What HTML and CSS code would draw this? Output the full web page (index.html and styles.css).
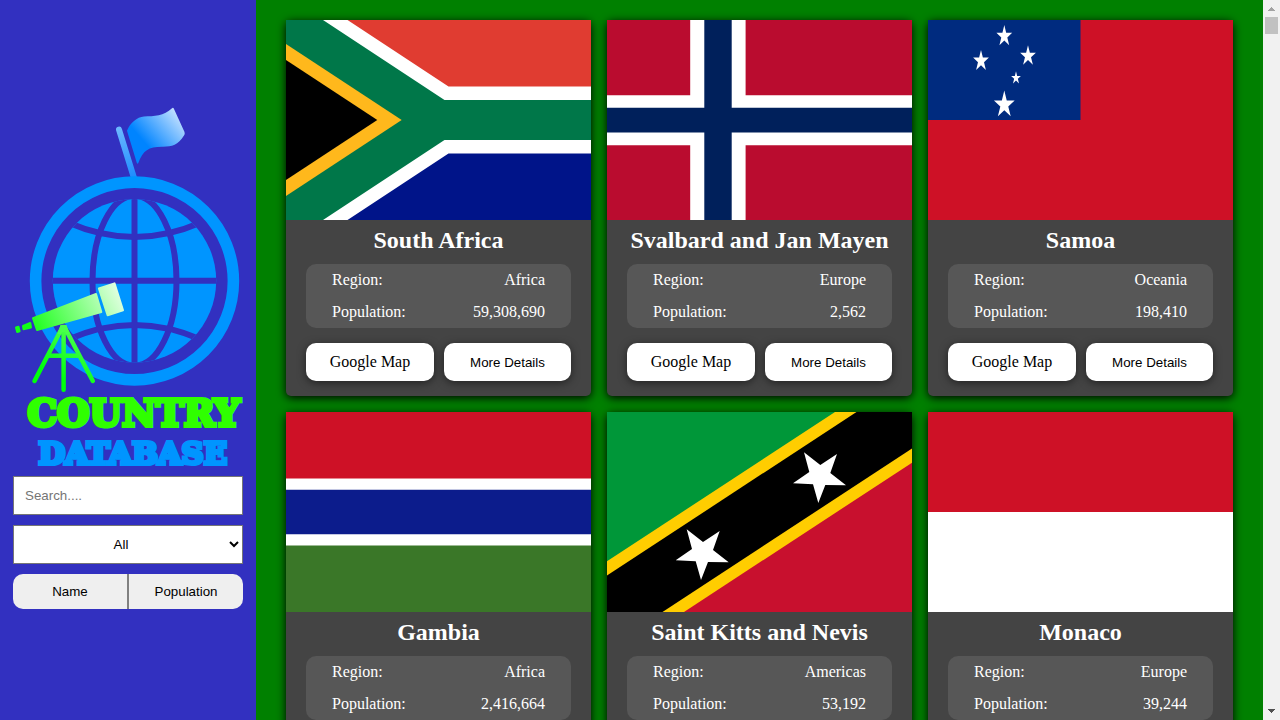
FILE: index.html
```html
<!DOCTYPE html>
<html lang="en">
<head>
<meta charset="utf-8">
<title>Country Database</title>
<link rel="stylesheet" href="styles.css">
</head>
<body>
<div class="app">
  <aside class="sidebar">
    <svg class="logo" viewBox="0 100 256 376" role="img" aria-label="Country Database">
      <defs>
        <linearGradient id="flag" gradientUnits="userSpaceOnUse" x1="145" y1="143" x2="181" y2="112"><stop offset="0" stop-color="#0084ff"/><stop offset="1" stop-color="#cfe6ff"/></linearGradient>
        <linearGradient id="pole" gradientUnits="userSpaceOnUse" x1="119" y1="128" x2="134" y2="178"><stop offset="0" stop-color="#6bb8ff"/><stop offset="1" stop-color="#1d8cff"/></linearGradient>
        <linearGradient id="scope" gradientUnits="userSpaceOnUse" x1="36" y1="327" x2="118" y2="285"><stop offset="0" stop-color="#22ff22"/><stop offset="1" stop-color="#e4ffe4"/></linearGradient>
        <linearGradient id="legs" gradientUnits="userSpaceOnUse" x1="50" y1="372" x2="78" y2="325"><stop offset="0" stop-color="#00ff0d"/><stop offset="1" stop-color="#55ff58"/></linearGradient>
        <clipPath id="disc"><circle cx="134.5" cy="280.8" r="81.7"/></clipPath>
      </defs>
      <path d="M119 129.700L134 178" stroke="url(#pole)" stroke-width="6" stroke-linecap="round"/>
      <circle cx="134.5" cy="281" r="98.9" fill="none" stroke="#0095ff" stroke-width="11.6"/>
      <circle cx="134.5" cy="280.8" r="81.7" fill="#0095ff"/>
      <g clip-path="url(#disc)" fill="none" stroke="#3230c0" stroke-width="6">
        <path d="M134.500 196V366M50 280.800H219"/>
        <ellipse cx="134.5" cy="280.8" rx="42" ry="85"/>
        <path d="M68 222.500Q134.500 251.500 201 222.500M68 339.500Q134.500 310.500 201 339.500"/>
      </g>
      <path fill="url(#flag)" d="M127 130.700C130 123 137 117 144 116.500C154 116 164 116 172 108.200Q173.200 107 174 109L184.500 132Q185.200 134 184 135.500C178 145 172 146.700 163 146.700C149 146.500 143 150 138.300 163Q137.300 164.500 136.700 162.500Z"/>
      <g fill="url(#scope)" stroke="url(#scope)" stroke-width="2" stroke-linejoin="round">
        <path d="M33 318.200L96 294L101.300 312L37 330Z"/>
        <path d="M98.900 288.400L114.500 283.400L123 310.200L107.600 315.200Z"/>
      </g>
      <g fill="#12ff18" stroke="#12ff18" stroke-width="2" stroke-linejoin="round">
        <path d="M23 326L30.200 323L31 327.500L23.500 329.200Z"/>
        <path d="M16 327.500L18.500 326.700L19.600 331.300L17.200 332Z"/>
      </g>
      <g fill="none" stroke="url(#legs)" stroke-width="4.500" stroke-linecap="round" stroke-linejoin="round">
        <path d="M62.500 327L34.500 381M64.500 327L92.800 381M63.600 327V389.700"/>
        <path d="M48.500 355.700H79" stroke-linecap="butt"/>
      </g>
      <path fill="#49ff4b" d="M60.500 325H66.500L69.500 334H66L65 332H62L61 334H57.500Z"/>
      <text class="logo-top" x="27.500" y="426.300" textLength="212.500" lengthAdjust="spacingAndGlyphs">COUNTRY</text>
      <text class="logo-bottom" x="38.500" y="463.800" textLength="188.500" lengthAdjust="spacingAndGlyphs">DATABASE</text>
    </svg>
    <input class="field" type="text" placeholder="Search....">
    <select class="field region"><option>All</option></select>
    <div class="sort"><button class="sort-btn">Name</button><button class="sort-btn">Population</button></div>
  </aside>

  <main class="cards">
    <article class="card">
      <svg class="flag" viewBox="0 0 305 200">
        <path fill="#e03c31" d="M0 0H305V100H0Z"/><path fill="#001489" d="M0 100H305V200H0Z"/>
        <path fill="#fff" d="M0 0H61.500L162.500 66.500H305V133.500H162.500L61.500 200H0Z"/>
        <path fill="#007749" d="M0 0H37L158.500 80H305V120H158.500L37 200H0Z"/>
        <path fill="#ffb81c" d="M0 24L115.700 100L0 176Z"/><path d="M0 40L91.300 100L0 160Z"/>
      </svg>
      <h2 class="name">South Africa</h2>
      <dl class="facts"><div class="fact"><dt>Region:</dt><dd>Africa</dd></div><div class="fact"><dt>Population:</dt><dd>59,308,690</dd></div></dl>
      <div class="actions"><a class="action">Google Map</a><button class="action">More Details</button></div>
    </article>
    <article class="card">
      <svg class="flag" viewBox="0 0 305 200">
        <path fill="#ba0c2f" d="M0 0H305V200H0Z"/>
        <path fill="#fff" d="M83.200 0H138.600V200H83.200ZM0 75.200H305V125.200H0Z"/>
        <path fill="#00205b" d="M97.300 0H124.700V200H97.300ZM0 87.700H305V112.500H0Z"/>
      </svg>
      <h2 class="name">Svalbard and Jan Mayen</h2>
      <dl class="facts"><div class="fact"><dt>Region:</dt><dd>Europe</dd></div><div class="fact"><dt>Population:</dt><dd>2,562</dd></div></dl>
      <div class="actions"><a class="action">Google Map</a><button class="action">More Details</button></div>
    </article>
    <article class="card">
      <svg class="flag" viewBox="0 0 305 200">
        <defs><path id="star" d="M0-1L.2245-.309L.951-.309L.3633.118L.5878.809L0 .382L-.5878.809L-.3633.118L-.951-.309L-.2245-.309Z"/></defs>
        <path fill="#ce1126" d="M0 0H305V200H0Z"/><path fill="#002b7f" d="M0 0H152.500V100H0Z"/>
        <g fill="#fff">
          <use href="#star" transform="translate(76.300 16.200) scale(8.300 11.300)"/>
          <use href="#star" transform="translate(53 41) scale(8.300 11)"/>
          <use href="#star" transform="translate(100 36) scale(8.300 10.700)"/>
          <use href="#star" transform="translate(88 58) scale(5.100 6.800)"/>
          <use href="#star" transform="translate(76.300 84.800) scale(10.900 14.300)"/>
        </g>
      </svg>
      <h2 class="name">Samoa</h2>
      <dl class="facts"><div class="fact"><dt>Region:</dt><dd>Oceania</dd></div><div class="fact"><dt>Population:</dt><dd>198,410</dd></div></dl>
      <div class="actions"><a class="action">Google Map</a><button class="action">More Details</button></div>
    </article>
    <article class="card">
      <svg class="flag" viewBox="0 0 305 200">
        <path fill="#fff" d="M0 0H305V200H0Z"/><path fill="#ce1126" d="M0 0H305V66.600H0Z"/>
        <path fill="#0c1c8c" d="M0 77.700H305V122.300H0Z"/><path fill="#3a7728" d="M0 133.400H305V200H0Z"/>
      </svg>
      <h2 class="name">Gambia</h2>
      <dl class="facts"><div class="fact"><dt>Region:</dt><dd>Africa</dd></div><div class="fact"><dt>Population:</dt><dd>2,416,664</dd></div></dl>
    </article>
    <article class="card">
      <svg class="flag" viewBox="0 0 305 200">
        <path fill="#009739" d="M0 0H305L0 200Z"/><path fill="#c8102e" d="M305 0V200H0Z"/>
        <path fill="#ffcd00" d="M0 149.300L228 0H305V50.700L77 200H0Z"/>
        <path d="M0 163.500L249.500 0H305V36.500L55.500 200H0Z"/>
        <path fill="#fff" d="M197 40.300L213.300 53L230 42L223.300 61L239 73.300L218.300 73L211.300 91L206 72.300L186 71.300L202.300 60Z"/>
        <path fill="#fff" d="M79.700 117.300L96 130L112.700 119L106 138L121.700 150.300L101 150L94 168L88.700 149.300L68.700 148.300L85 137Z"/>
      </svg>
      <h2 class="name">Saint Kitts and Nevis</h2>
      <dl class="facts"><div class="fact"><dt>Region:</dt><dd>Americas</dd></div><div class="fact"><dt>Population:</dt><dd>53,192</dd></div></dl>
    </article>
    <article class="card">
      <svg class="flag" viewBox="0 0 305 200"><path fill="#ce1126" d="M0 0H305V100H0Z"/><path fill="#fff" d="M0 100H305V200H0Z"/></svg>
      <h2 class="name">Monaco</h2>
      <dl class="facts"><div class="fact"><dt>Region:</dt><dd>Europe</dd></div><div class="fact"><dt>Population:</dt><dd>39,244</dd></div></dl>
    </article>
  </main>

  <div class="scrollbar">
    <svg class="arrow" viewBox="0 0 17 17" shape-rendering="crispEdges"><path fill="#a3a3a3" d="M8 7h1v1h1v1h1v1h1v1H5v-1h1V9h1V8h1z"/></svg>
    <div class="thumb"></div>
    <svg class="arrow" viewBox="0 0 17 17" shape-rendering="crispEdges"><path fill="#505050" d="M5 6h7v1h-1v1h-1v1H9v1H8V9H7V8H6V7H5z"/></svg>
  </div>
</div>
</body>
</html>
```

FILE: styles.css
```css
* { box-sizing: border-box; }

body {
  margin: 0;
  height: 720px;
  overflow: hidden;
  font: 16px/18px "Liberation Serif", "Times New Roman", serif;
}

.app {
  display: flex;
  height: 720px;
  background: #008000;
}

.sidebar {
  display: flex;
  flex-direction: column;
  flex: 0 0 256px;
  padding: 100px 13px 0;
  background: #3230c0;
}

.logo {
  flex: none;
  width: 256px;
  height: 376px;
  margin: 0 -13px;
}

.logo-top,
.logo-bottom {
  font-family: "DejaVu Serif", serif;
  font-weight: bold;
  stroke-width: 4px;
}

.logo-top { font-size: 37px; fill: #2fff00; stroke: #2fff00; }
.logo-bottom { font-size: 30px; fill: #0095ff; stroke: #0095ff; }

.field {
  flex: none;
  width: 230px;
  height: 39px;
  margin: 0 0 10px;
  padding: 0 11px;
  border: 1px solid #767676;
  border-radius: 0;
  background: #fff;
  font: 13.333px "Liberation Sans", Arial, sans-serif;
  color: #000;
}

.field::placeholder { color: #757575; }
.region { padding: 0 2px 0 0; text-align: center; }

.sort {
  display: flex;
  height: 35px;
  border-radius: 10px;
  overflow: hidden;
}

.sort-btn {
  flex: 1;
  padding: 0;
  border: 0;
  background: #efefef;
  font: 13.333px "Liberation Sans", Arial, sans-serif;
  color: #000;
}

.sort-btn:first-child { border-right: 1px solid #808080; }
.sort-btn:last-child { border-left: 1px solid #808080; }

.cards {
  display: grid;
  grid-template-columns: repeat(3, 305px);
  grid-auto-rows: 376px;
  gap: 16px;
  flex: 1;
  padding: 20px 30px;
  overflow: hidden;
}

.card {
  border-radius: 5px;
  background: #444;
  box-shadow: 0 2px 10px #000;
}

.flag {
  display: block;
  width: 305px;
  height: 200px;
}

.name {
  margin: 0 0 10px;
  padding-top: 7px;
  font-size: 24px;
  line-height: 27px;
  color: #fff;
  text-align: center;
}

.facts {
  margin: 0 20px 15px;
  padding: 0 26px;
  border-radius: 10px;
  background: #575757;
  color: #fff;
}

.fact {
  display: flex;
  align-items: center;
  justify-content: space-between;
  height: 32px;
}

.fact dd { margin: 0; }

.actions {
  display: grid;
  grid-template-columns: 128px 127px;
  gap: 10px;
  margin: 0 20px;
}

.action {
  display: flex;
  align-items: center;
  justify-content: center;
  height: 38px;
  padding: 0;
  border: 0;
  border-radius: 10px;
  background: #fff;
  box-shadow: 0 2px 8px rgba(0, 0, 0, 0.5);
  color: #000;
}

button.action { font: 13.333px "Liberation Sans", Arial, sans-serif; }

.scrollbar {
  display: flex;
  flex-direction: column;
  flex: 0 0 17px;
  background: #f1f1f1;
}

.arrow { width: 17px; height: 17px; }
.arrow:last-child { margin-top: auto; }

.thumb {
  width: 13px;
  height: 17px;
  margin: 0 2px;
  background: #c1c1c1;
}
```
